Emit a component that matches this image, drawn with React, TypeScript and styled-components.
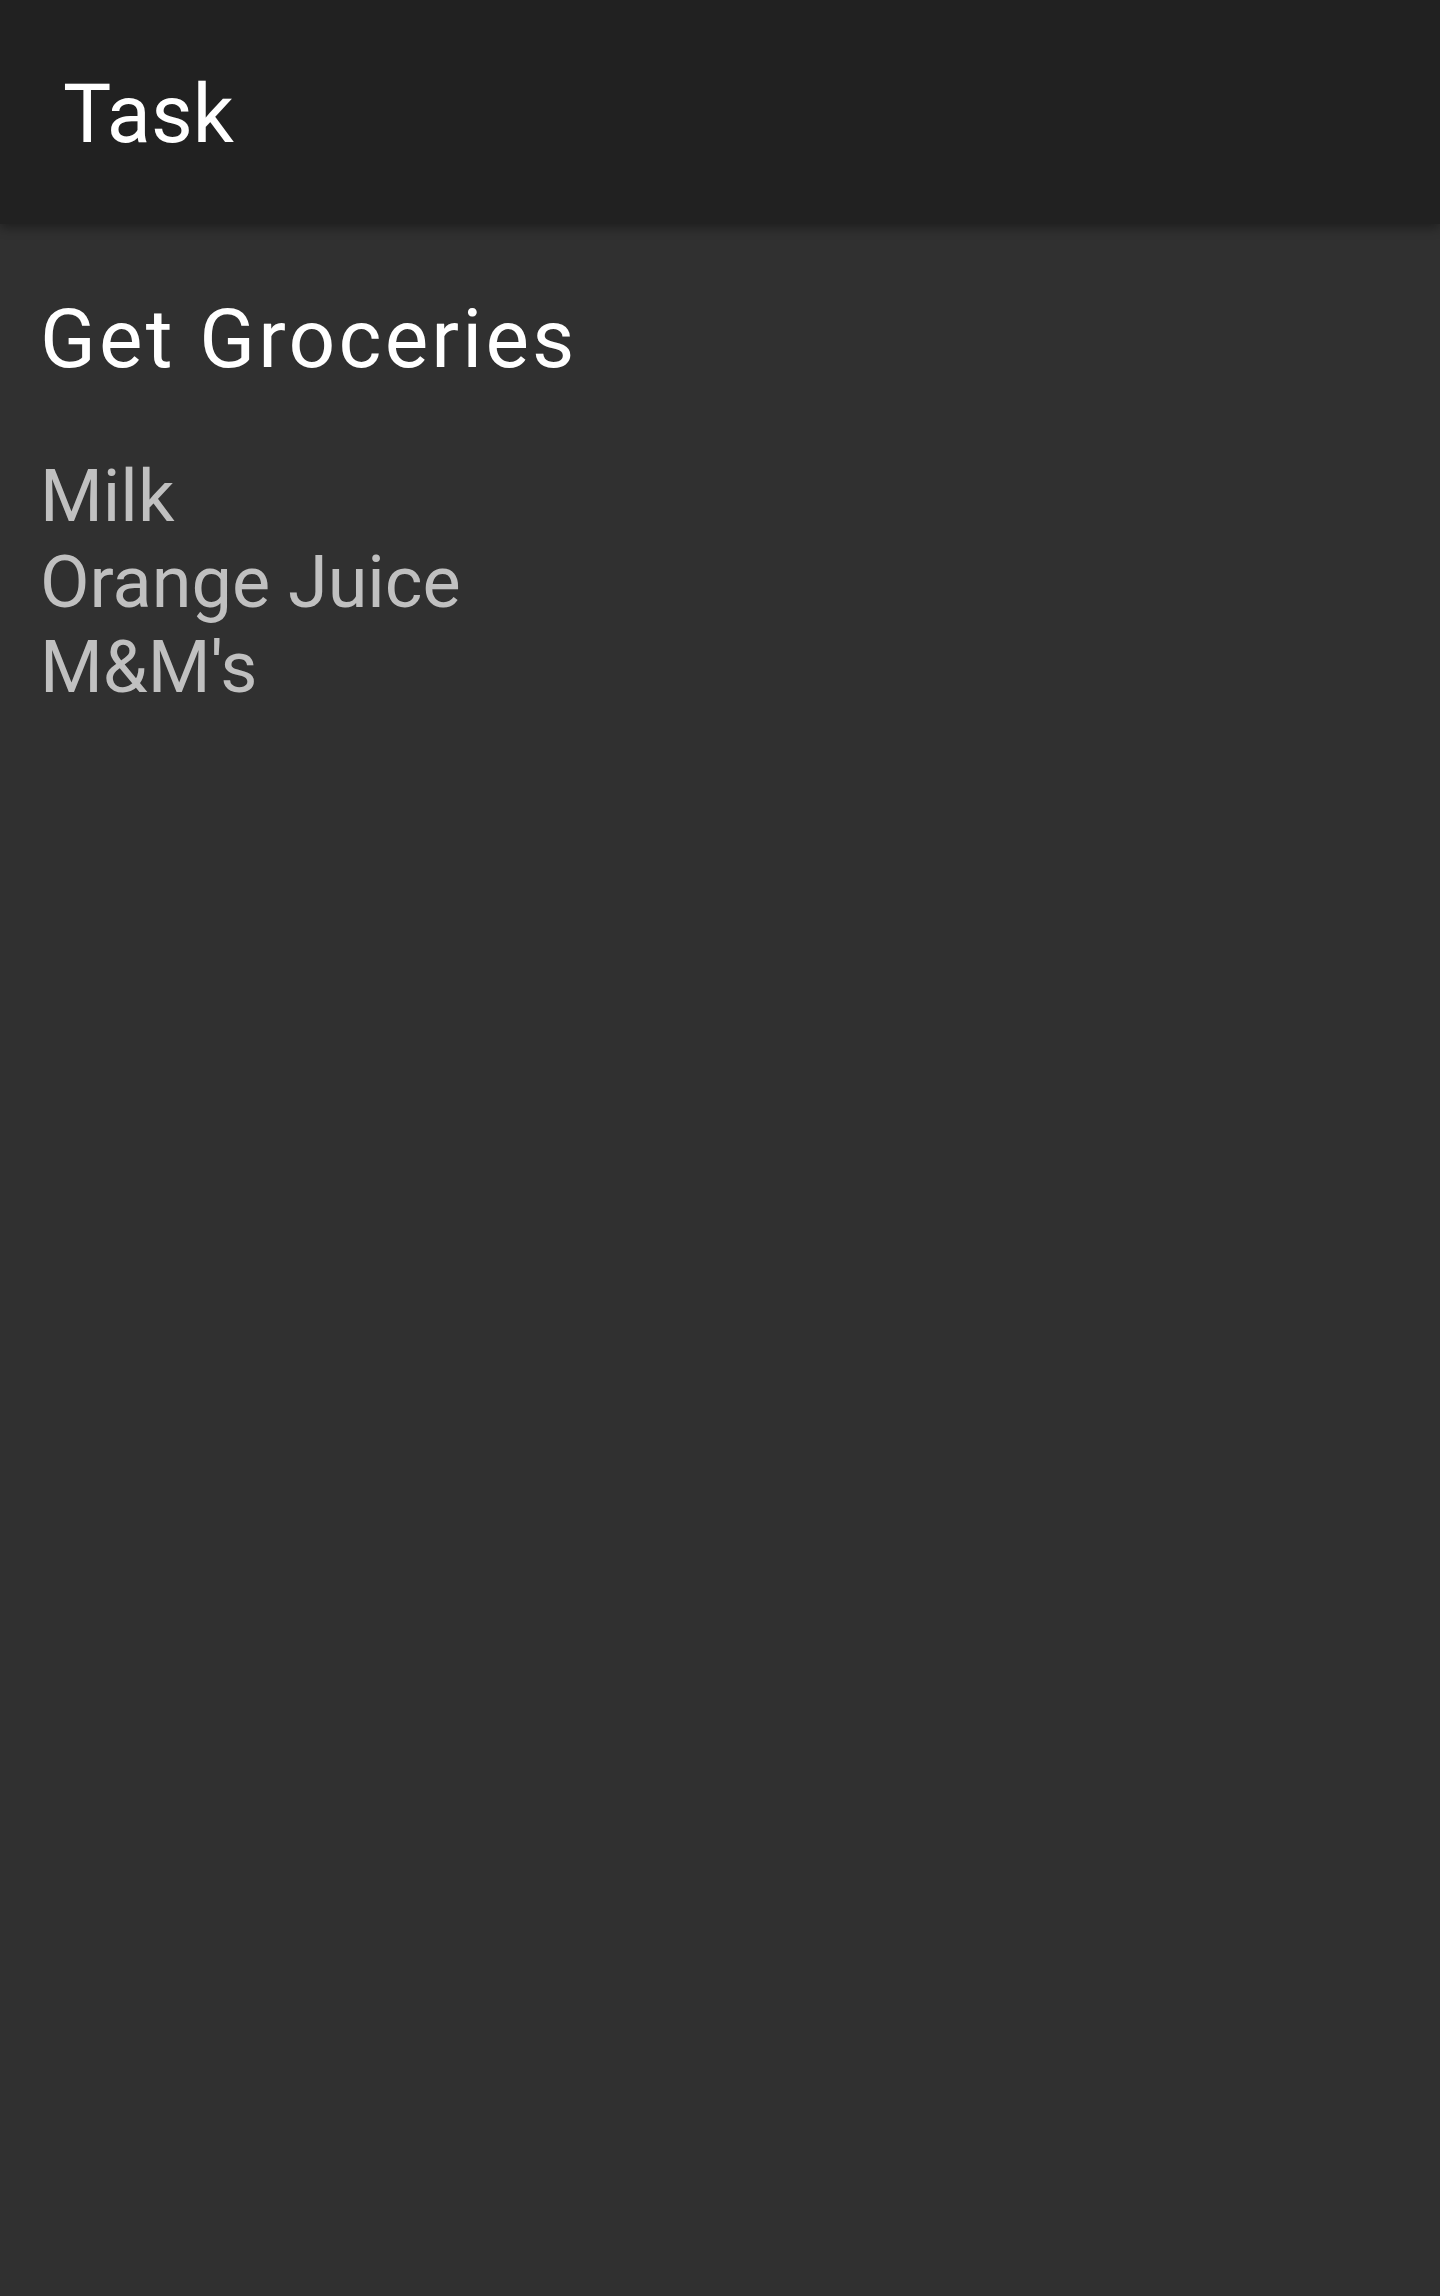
import React from "react";
import styled, { createGlobalStyle } from "styled-components";

const GlobalStyle = createGlobalStyle`
  html, body {
    margin: 0;
    padding: 0;
    background: #303030;
  }
  body {
    font-family: Roboto, "Noto Sans", "Liberation Sans", sans-serif;
  }
  #root {
    min-height: 2296px;
    background: #303030;
  }
`;

const Page = styled.div`
  min-height: 2296px;
  display: flex;
  flex-direction: column;
  background: #303030;
`;

const AppBar = styled.header`
  height: 224px;
  flex: 0 0 auto;
  display: flex;
  align-items: center;
  padding: 0 63px;
  background: #212121;
  box-shadow: 0 4px 10px rgba(0, 0, 0, 0.35);
  position: relative;
  z-index: 1;
  box-sizing: border-box;
`;

const AppTitle = styled.h1`
  margin: 6px 0 0;
  font-size: 81px;
  font-weight: 400;
  line-height: 1.172;
  color: #ffffff;
`;

const Content = styled.main`
  display: flex;
  flex-direction: column;
  padding: 67px 40px 0;
`;

const TaskTitle = styled.h2`
  margin: 0;
  font-size: 82px;
  font-weight: 400;
  line-height: 1.172;
  letter-spacing: 3.2px;
  color: #ffffff;
`;

const ItemList = styled.ul`
  list-style: none;
  margin: 67px 0 0;
  padding: 0;
  display: flex;
  flex-direction: column;
`;

const Item = styled.li`
  font-size: 72px;
  line-height: 85.5px;
  color: #c0c0c0;
`;

const items = ["Milk", "Orange Juice", "M&M's"];

export default function App() {
  return (
    <>
      <GlobalStyle />
      <Page>
        <AppBar>
          <AppTitle>Task</AppTitle>
        </AppBar>
        <Content>
          <TaskTitle>Get Groceries</TaskTitle>
          <ItemList>
            {items.map((it) => (
              <Item key={it}>{it}</Item>
            ))}
          </ItemList>
        </Content>
      </Page>
    </>
  );
}
